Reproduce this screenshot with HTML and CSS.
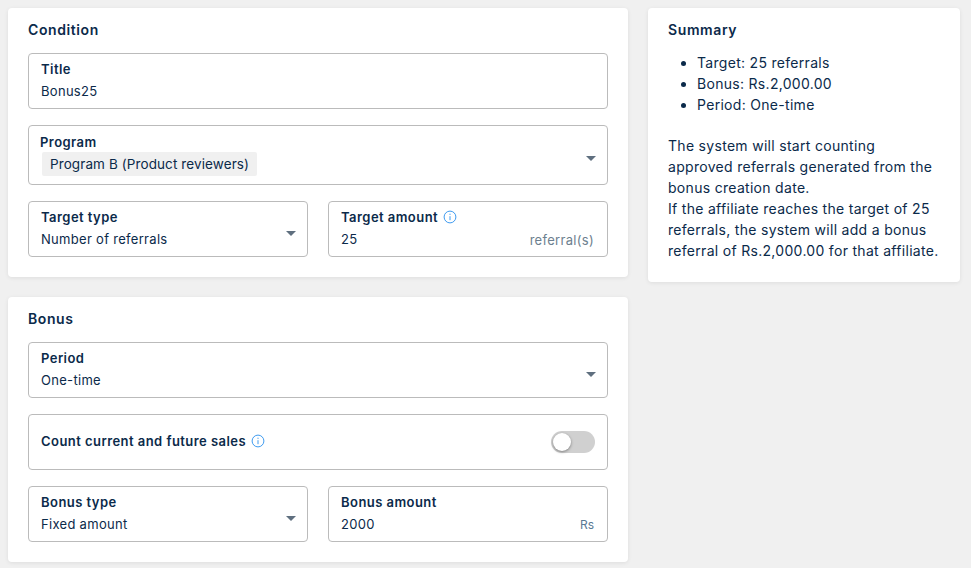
FILE: index.html
```html
<!DOCTYPE html>
<html lang="en">
<head>
    <meta charset="UTF-8">
    <meta name="viewport" content="width=device-width, initial-scale=1.0">
    <title>Bonus</title>
    <link rel="stylesheet" href="styles.css">
</head>
<body>
    <div class="layout">
        <div class="main-col">
            <section class="card">
                <h2 class="card-title">Condition</h2>
                <div class="field">
                    <div class="field-label">Title</div>
                    <div class="field-value">Bonus25</div>
                </div>
                <div class="field field-program">
                    <div class="field-label">Program</div>
                    <div class="tag">Program B (Product reviewers)</div>
                    <span class="caret"></span>
                </div>
                <div class="field-row">
                    <div class="field">
                        <div class="field-label">Target type</div>
                        <div class="field-value">Number of referrals</div>
                        <span class="caret"></span>
                    </div>
                    <div class="field">
                        <div class="field-label">Target amount
                            <svg class="info" viewBox="0 0 14 14"><circle cx="7" cy="7" r="5.9"/><path d="M7 6.2v4M7 3.7v1.2"/></svg>
                        </div>
                        <div class="field-value">25</div>
                        <span class="suffix">referral(s)</span>
                    </div>
                </div>
            </section>
            <section class="card">
                <h2 class="card-title">Bonus</h2>
                <div class="field">
                    <div class="field-label">Period</div>
                    <div class="field-value">One-time</div>
                    <span class="caret"></span>
                </div>
                <div class="field field-switch">
                    <div class="field-label">Count current and future sales
                        <svg class="info" viewBox="0 0 14 14"><circle cx="7" cy="7" r="5.9"/><path d="M7 6.2v4M7 3.7v1.2"/></svg>
                    </div>
                    <span class="switch"><span class="knob"></span></span>
                </div>
                <div class="field-row">
                    <div class="field">
                        <div class="field-label">Bonus type</div>
                        <div class="field-value">Fixed amount</div>
                        <span class="caret"></span>
                    </div>
                    <div class="field">
                        <div class="field-label">Bonus amount</div>
                        <div class="field-value">2000</div>
                        <span class="suffix suffix-small">Rs</span>
                    </div>
                </div>
            </section>
        </div>
        <aside class="card summary">
            <h2 class="card-title">Summary</h2>
            <ul class="summary-list">
                <li>Target: 25 referrals</li>
                <li>Bonus: Rs.2,000.00</li>
                <li>Period: One-time</li>
            </ul>
            <p class="summary-text">The system will start counting<br>approved referrals generated from the<br>bonus creation date.<br>If the affiliate reaches the target of 25<br>referrals, the system will add a bonus<br>referral of Rs.2,000.00 for that affiliate.</p>
        </aside>
    </div>
</body>
</html>
```

FILE: styles.css
```css
body {
    margin: 0;
    padding: 8px 11px 6px 8px;
    background: #f0f0f0;
    color: #0b2a4a;
    font-family: Inter, "Open Sans", sans-serif;
    font-size: 13.5px;
    overflow: hidden;
}
.layout {
    display: grid;
    grid-template-columns: 620px 312px;
    gap: 20px;
    align-items: start;
}
.main-col {
    display: flex;
    flex-direction: column;
    gap: 20px;
}
.card {
    background: #fff;
    border-radius: 4px;
    padding: 12px 20px 20px;
    box-shadow: 0 1px 4px rgba(0, 0, 0, 0.08);
}
.card-title {
    margin: 0 0 13px;
    height: 20px;
    font-size: 14px;
    font-weight: 600;
    letter-spacing: 0.6px;
    line-height: 20px;
}
.field {
    position: relative;
    box-sizing: border-box;
    height: 56px;
    margin-bottom: 16px;
    padding: 5px 12px;
    border: 1px solid #bbb;
    border-radius: 4px;
}
.field:last-child {
    margin-bottom: 0;
}
.field-program {
    height: 60px;
    padding-top: 6px;
}
.field-switch {
    padding-top: 16px;
}
.field-row {
    display: grid;
    grid-template-columns: 1fr 1fr;
    gap: 20px;
}
.field-row .field {
    margin-bottom: 0;
}
.field-label {
    height: 20px;
    font-size: 13px;
    font-weight: 600;
    letter-spacing: 0.45px;
    line-height: 20px;
}
.field-value {
    margin-top: 2px;
    font-size: 13px;
    letter-spacing: 0.3px;
    line-height: 20px;
}
.field-program .field-label {
    margin-left: -1px;
}
.tag {
    display: inline-block;
    margin-left: 1px;
    padding: 0 8px;
    height: 24px;
    background: #f0f0f0;
    border-radius: 2px;
    font-size: 13.5px;
    letter-spacing: 0.1px;
    line-height: 24px;
}
.caret {
    position: absolute;
    right: 11px;
    top: 29px;
    width: 0;
    height: 0;
    border-left: 5px solid transparent;
    border-right: 5px solid transparent;
    border-top: 5px solid #5f6f7f;
}
.field-program .caret {
    top: 30px;
}
.suffix {
    position: absolute;
    right: 13px;
    bottom: 6px;
    color: #6d7f8f;
    font-size: 13px;
    letter-spacing: 0.3px;
    line-height: 20px;
}
.suffix-small {
    font-size: 12px;
    letter-spacing: 0;
    color: #5a7a94;
}
.info {
    width: 14px;
    height: 14px;
    margin-left: 1px;
    vertical-align: -2px;
    fill: none;
    stroke: #3f9bf0;
    stroke-width: 1;
}
.switch {
    position: absolute;
    right: 12px;
    top: 16px;
    width: 44px;
    height: 22px;
    background: #d0d0d0;
    border-radius: 11px;
}
.knob {
    display: block;
    width: 18px;
    height: 18px;
    margin: 2px;
    background: #fff;
    border-radius: 50%;
    box-shadow: 0 1px 3px rgba(0, 0, 0, 0.4);
}
.summary {
    padding-bottom: 21px;
    white-space: nowrap;
}
.summary-list {
    margin: -1px 0 20px;
    padding-left: 29px;
    font-size: 14px;
    letter-spacing: 0.3px;
    line-height: 21px;
}
.summary-text {
    margin: 0;
    font-size: 14px;
    letter-spacing: 0.3px;
    line-height: 21px;
}
```
